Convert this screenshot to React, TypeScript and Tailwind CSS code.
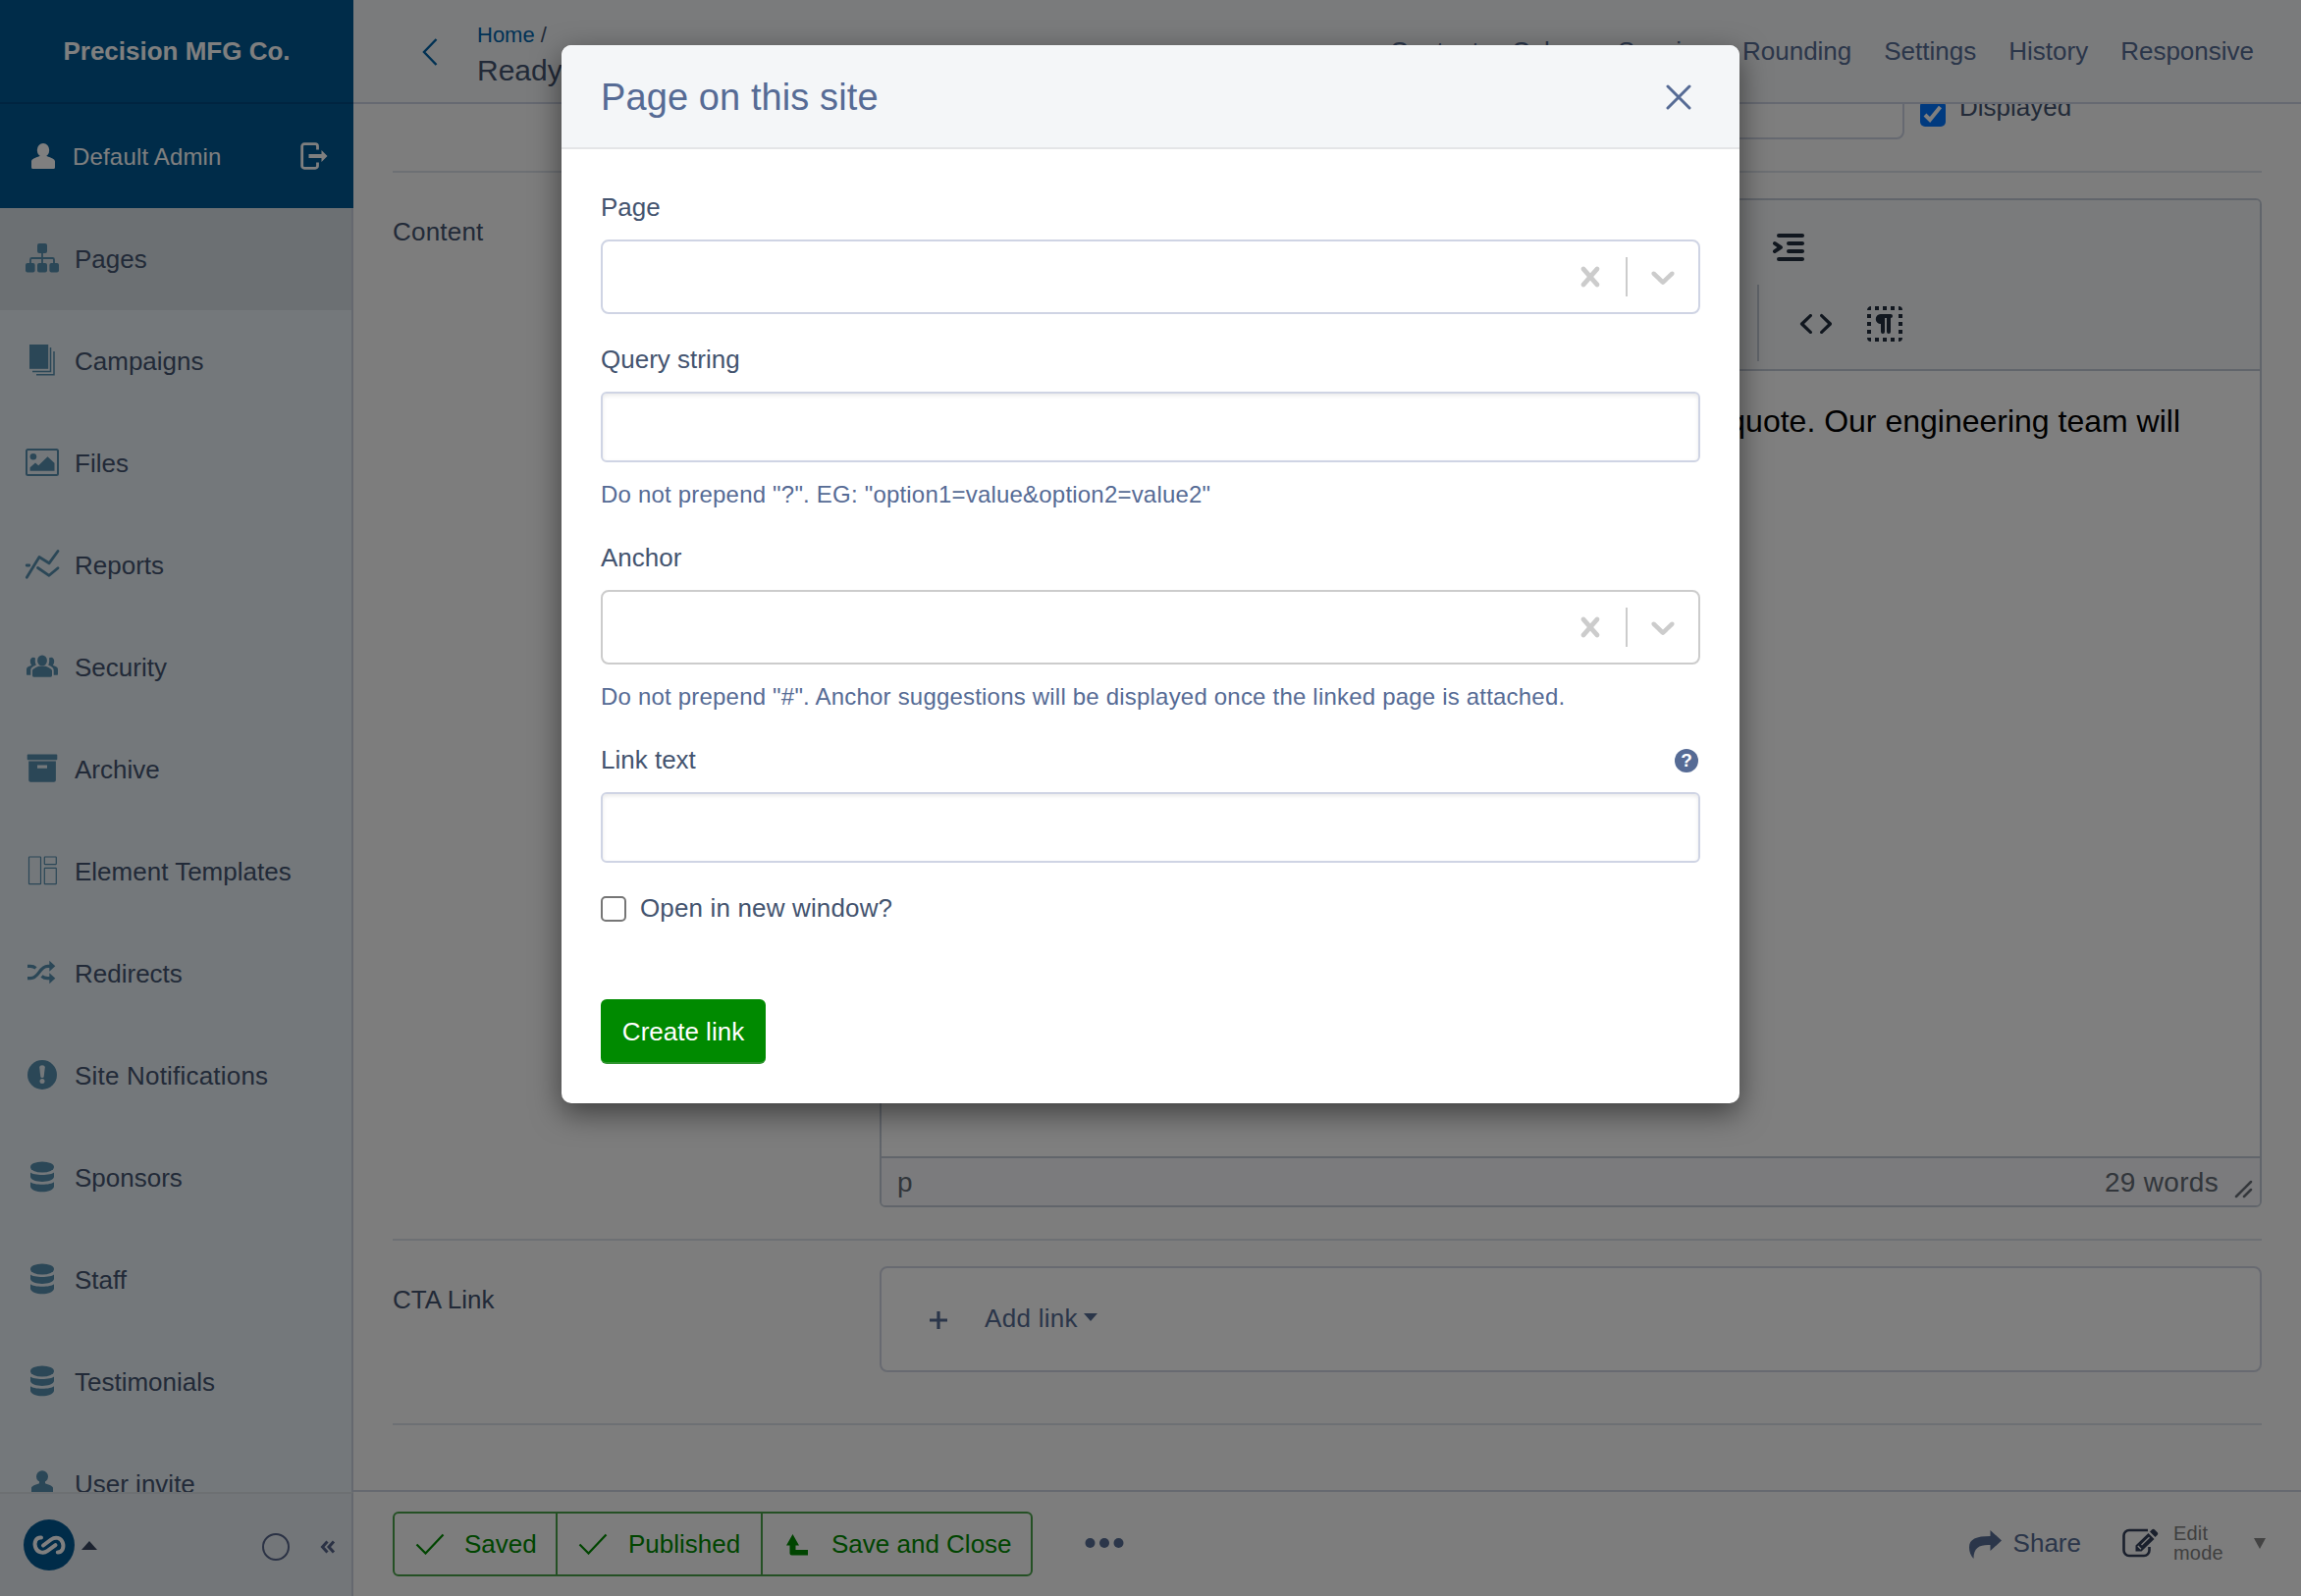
import type { ReactNode } from 'react';
import clsx from 'clsx';

const dbIcon = (
    <>
        <ellipse cx="20" cy="9" rx="12" ry="5.6" />
        <path d="M8 14.5c2.5 3.3 21.500 3.300 24 0v4.500c-1.500 6.500-22.500 6.500-24 0z" />
        <path d="M8 24.300c2.500 3.300 21.500 3.300 24 0v4.700c-1.500 7-22.500 7-24 0z" />
    </>
);

const navigation: { name: string; active?: boolean; icon: ReactNode }[] = [
    {
        name: 'Pages',
        active: true,
        icon: (
            <>
                <rect x="15" y="4" width="10" height="10" rx="2" />
                <rect x="3" y="24" width="9.600" height="9.600" rx="2" />
                <rect x="15" y="24" width="10" height="9.600" rx="2" />
                <rect x="27.400" y="24" width="9.600" height="9.600" rx="2" />
                <path d="M20 13v12M8 25v-4.500a1.500 1.500 0 0 1 1.500-1.500h21a1.500 1.500 0 0 1 1.500 1.500V25" fill="none" stroke="currentColor" strokeWidth="1.800" />
            </>
        ),
    },
    {
        name: 'Campaigns',
        icon: (
            <>
                <path d="M7 3h19.200v24.800H7z" />
                <path d="M28.500 6v24.500H10M32 10v23.800H14" fill="none" stroke="currentColor" strokeWidth="1.500" />
            </>
        ),
    },
    {
        name: 'Files',
        icon: (
            <>
                <rect x="4" y="6" width="32" height="26" rx="1.500" fill="none" stroke="currentColor" strokeWidth="2" />
                <circle cx="10.900" cy="13.300" r="3.300" />
                <path d="M7.600 27.700v-3.500l5.400-4.700 3.200 2.700 9.300-9 7 6.500v8z" />
            </>
        ),
    },
    {
        name: 'Reports',
        icon: (
            <path
                d="M4.300 32.300 17 11.500l10 6.300L36 5.500M15.500 22.500 27 30.300l9-7.600M4.200 20h2.600"
                fill="none"
                stroke="currentColor"
                strokeWidth="2.800"
                strokeLinecap="round"
                strokeLinejoin="round"
            />
        ),
    },
    {
        name: 'Security',
        icon: (
            <>
                <ellipse cx="20" cy="13" rx="4.900" ry="5.600" />
                <path d="M10 28v-4.500c0-1.500 1-2.300 6.500-4.800h7c5.500 2.500 6.500 3.300 6.500 4.800V28a1.500 1.500 0 0 1-1.500 1.700h-17A1.500 1.500 0 0 1 10 28z" />
                <path d="M13 10.500c-2.500-2-5.500 0-5.200 3.500.1 1.500.6 2.800 1.400 3.700-3.500 1.500-5.200 2-5.200 4.300v4.800c0 .8.300 1 1 1h3.300V23c0-2.500 1.500-3.500 5.500-5.500-1-2-1.300-4.500-.8-7zM27 10.500c2.500-2 5.500 0 5.200 3.500-.1 1.500-.6 2.800-1.400 3.700 3.500 1.500 5.200 2 5.200 4.300v4.800c0 .8-.3 1-1 1h-3.300V23c0-2.500-1.500-3.500-5.500-5.500 1-2 1.300-4.500.8-7z" />
            </>
        ),
    },
    {
        name: 'Archive',
        icon: (
            <>
                <rect x="4.700" y="4.500" width="30.600" height="5.800" rx="1" />
                <path fillRule="evenodd" d="M6.200 11.600h27.700v19.200a2 2 0 0 1-2 2H8.200a2 2 0 0 1-2-2zM15 15.400v3.300h10v-3.300z" />
            </>
        ),
    },
    {
        name: 'Element Templates',
        icon: (
            <g fill="none" stroke="currentColor" strokeWidth="1.200">
                <rect x="6.500" y="5" width="12" height="27.700" rx=".5" />
                <rect x="22.300" y="5" width="12" height="7.600" rx=".5" />
                <rect x="22.300" y="16.300" width="12" height="16.400" rx=".5" />
            </g>
        ),
    },
    {
        name: 'Redirects',
        icon: (
            <>
                <path
                    d="M5 12.300h3c2.500 0 4 .6 5.500 2M5 24.700h3c9 0 9-12.400 17.500-12.400h2.500M19.500 22.500c1.800 1.600 3.500 2.200 6 2.200H28"
                    fill="none"
                    stroke="currentColor"
                    strokeWidth="3.200"
                />
                <path d="M27.300 6.800v11l6-5.500zM27.300 19.200v11l6-5.500z" />
            </>
        ),
    },
    {
        name: 'Site Notifications',
        icon: (
            <>
                <circle cx="20" cy="19" r="15" />
                <path d="M17.200 11.500c0-3 5.600-3 5.600 0L21.700 21c-.2 1.300-3.200 1.300-3.400 0z" className="fill-[#e8f0f6]" />
                <circle cx="20" cy="25.500" r="2.500" className="fill-[#e8f0f6]" />
            </>
        ),
    },
    { name: 'Sponsors', icon: dbIcon },
    { name: 'Staff', icon: dbIcon },
    { name: 'Testimonials', icon: dbIcon },
    {
        name: 'User invite',
        icon: (
            <>
                <circle cx="20" cy="12.300" r="6" />
                <path d="M9 34V24c0-2 3-3 8-4.800v-3h6v3c5 1.800 8 2.800 8 4.800v10z" />
            </>
        ),
    },
];

const elementTabs = ['Content', 'Colors', 'Spacing', 'Rounding', 'Settings', 'History', 'Responsive'];

function Sidebar() {
    return (
        <aside className="flex w-[360px] shrink-0 flex-col bg-[#e8f0f6]">
            <div className="flex h-[106px] shrink-0 items-center justify-center border-b-2 border-[#004880] bg-[#005893] text-[26px] font-bold text-white">
                Precision MFG Co.
            </div>
            <div className="flex h-[106px] shrink-0 items-center bg-[#005893] pr-[26px] pl-8 text-white">
                <svg width="24" height="28" viewBox="0 0 24 28" fill="currentColor">
                    <ellipse cx="12" cy="8" rx="6.200" ry="7" />
                    <path d="M0 25.500v-6c0-2.500 3.500-3.500 8.500-5.500h7c5 2 8.500 3 8.500 5.500v6a1.500 1.500 0 0 1-1.500 1.500h-21A1.500 1.500 0 0 1 0 25.500z" />
                </svg>
                <span className="mt-0.5 ml-[18px] text-[24px] tracking-[0.17px]">Default Admin</span>
                <svg className="ml-auto" width="28" height="28" viewBox="0 0 28 28" fill="none">
                    <path d="M17.500 7.500V4a2.300 2.300 0 0 0-2.300-2.300H4A2.300 2.300 0 0 0 1.700 4v20A2.300 2.300 0 0 0 4 26.300h11.200a2.300 2.300 0 0 0 2.300-2.300v-3.500" stroke="currentColor" strokeWidth="2.800" />
                    <path d="M8.500 12h13V8l6 6-6 6v-4h-13z" fill="currentColor" />
                </svg>
            </div>
            <nav className="min-h-0 flex-1 overflow-hidden border-r-2 border-[#cad0de]">
                {navigation.map((item) => (
                    <a key={item.name} className={clsx('flex h-[104px] items-center pl-[23px] text-[26px] text-[#445571]', item.active && 'bg-[#d8e1e7]')}>
                        <svg width="40" height="40" viewBox="0 0 40 40" fill="currentColor" className="text-[#568eae]">
                            {item.icon}
                        </svg>
                        <span className={clsx('ml-[13px]', item.name === 'Site Notifications' && 'tracking-[0.2px]')}>{item.name}</span>
                    </a>
                ))}
            </nav>
            <div className="flex h-[106px] shrink-0 items-center border-t-2 border-r-2 border-t-[#dae0e5] border-r-[#cad0de] bg-[#e7edf2] pr-4 pl-6">
                <svg width="52" height="52" viewBox="0 0 52 52">
                    <circle cx="26" cy="26" r="26" className="fill-[#005893]" />
                    <path
                        d="M18 18.500C12.500 18 10.500 23.500 12.200 28.500c1.700 5.200 8 6.500 12 3.700l8.300-6M20 26.500l8-6c4.500-3.300 10-2 11.800 3 1.800 5-.3 10-5 10"
                        fill="none"
                        stroke="#fff"
                        strokeWidth="4"
                        strokeLinecap="round"
                    />
                </svg>
                <svg className="ml-[7px]" width="16" height="9" viewBox="0 0 16 9">
                    <path d="M0 9l8-9 8 9z" fill="#384761" />
                </svg>
                <span className="mt-1 ml-auto size-7 rounded-full border-2 border-[#56648a]" />
                <svg className="mt-1 ml-[31px]" width="16" height="15" viewBox="0 0 16 15" fill="none" stroke="#56648a" strokeWidth="3">
                    <path d="M7.500 1.500 2.500 7l5 5.500M14 1.500 9 7l5 5.500" />
                </svg>
            </div>
        </aside>
    );
}

function Header() {
    return (
        <header className="flex h-[106px] shrink-0 items-center border-b-2 border-[#ccd2e2] bg-[#f4f6f9] pr-12 pl-[70px]">
            <svg className="mt-0.5" width="16" height="28" viewBox="0 0 16 28" fill="none" stroke="#0062a6" strokeWidth="2.400">
                <path d="M14.500 1 2 14l12.500 13" />
            </svg>
            <div className="mt-[5px] ml-10 flex flex-col text-[#445571]">
                <span className="text-[22px] leading-[34px]">
                    <a className="text-[#0065ad]">Home</a> /
                </span>
                <h1 className="text-[30px] leading-[38px]">Ready</h1>
            </div>
            <nav className="ml-auto flex gap-[33px] text-[26px] text-[#566c94]">
                {elementTabs.map((tab) => (
                    <a key={tab}>{tab}</a>
                ))}
            </nav>
        </header>
    );
}

function RichTextEditor() {
    return (
        <div className="flex h-[1028px] w-[1408px] flex-col overflow-hidden rounded-md border-2 border-[#c2cbd6] bg-white">
            <div className="h-[174px] shrink-0 border-b-2 border-[#c2cbd6] bg-[#f4f6f9] text-[#222f3e]">
                <div className="flex h-[86px] items-center pt-2.5 pl-[900px]">
                    <svg width="48" height="48" viewBox="0 0 24 24" fill="currentColor">
                        <path d="M7 5h12c.6 0 1 .4 1 1s-.4 1-1 1H7a1 1 0 1 1 0-2Zm5 4h7c.6 0 1 .4 1 1s-.4 1-1 1h-7a1 1 0 0 1 0-2Zm0 4h7c.6 0 1 .4 1 1s-.4 1-1 1h-7a1 1 0 0 1 0-2Zm-5 4h12c.6 0 1 .4 1 1s-.4 1-1 1H7a1 1 0 0 1 0-2Zm-2.600-3.800L6.200 12l-1.800-1.200a1 1 0 0 1 1.200-1.600l3 2a1 1 0 0 1 0 1.600l-3 2a1 1 0 1 1-1.200-1.600Z" />
                    </svg>
                </div>
                <div className="ml-[892px] flex h-[78px] items-center gap-[22px] border-l-2 border-[#c2cbd6] pt-0.5 pl-[34px]">
                    <svg width="48" height="48" viewBox="0 0 24 24" fill="currentColor">
                        <path d="M9.800 15.700c.3.3.3.8 0 1-.3.4-.9.4-1.200 0l-4.400-4.100a.8.8 0 0 1 0-1.200l4.400-4.200c.3-.3.9-.3 1.200 0 .3.3.3.8 0 1.100L6 12l3.800 3.700ZM14.200 15.700c-.3.3-.3.8 0 1 .4.4.9.4 1.200 0l4.400-4.100c.3-.3.3-.9 0-1.200l-4.400-4.200a.8.8 0 0 0-1.200 0c-.3.3-.3.8 0 1.100L18 12l-3.800 3.700Z" />
                    </svg>
                    <svg width="48" height="48" viewBox="0 0 24 24" fill="currentColor">
                        <path d="M9 19v2H7v-2h2Zm-4 0v2a2 2 0 0 1-2-2h2Zm8 0v2h-2v-2h2Zm8 0a2 2 0 0 1-2 2v-2h2Zm-4 0v2h-2v-2h2ZM15 7a1 1 0 0 1 0 2v7a1 1 0 0 1-2 0V9h-1v7a1 1 0 0 1-2 0v-4a2.500 2.500 0 0 1-.2-5H15ZM5 15v2H3v-2h2Zm16 0v2h-2v-2h2ZM5 11v2H3v-2h2Zm16 0v2h-2v-2h2ZM5 7v2H3V7h2Zm16 0v2h-2V7h2ZM5 3v2H3c0-1.100.9-2 2-2Zm8 0v2h-2V3h2Zm6 0a2 2 0 0 1 2 2h-2V3ZM9 3v2H7V3h2Zm8 0v2h-2V3h2Z" />
                    </svg>
                </div>
            </div>
            <p className="flex-1 pt-[30px] pr-[81px] text-right text-[32px] leading-[42px] text-black">quote. Our engineering team will</p>
            <div className="flex h-[50px] shrink-0 items-center border-t-2 border-[#c2cbd6] bg-[#f6f7fb] pr-1.5 pl-4 text-[28px] text-[#646c76]">
                <span className="mt-px">p</span>
                <span className="mt-px ml-auto tracking-[0.3px]">29 words</span>
                <svg className="mt-4 ml-4" width="20" height="20" viewBox="0 0 20 20" stroke="#6b7079" strokeWidth="2.500" strokeLinecap="round">
                    <path d="M2 17 17 2M10 17l7-7" />
                </svg>
            </div>
        </div>
    );
}

function ElementForm() {
    return (
        <main className="flex min-h-0 flex-1 flex-col overflow-hidden px-10 text-[26px] text-[#445571]">
            <div className="flex h-[70px] shrink-0 items-start border-b-2 border-[#dbe1e8] pl-[496px]">
                <div className="-mt-9 h-[72px] w-[1044px] rounded-lg border-2 border-[#ccd3e2] bg-[#fdfdfd]" />
                <span className="-mt-[3px] ml-4 flex size-[26px] items-center justify-center rounded-[5px] bg-[#0075ff]">
                    <svg width="20" height="20" viewBox="0 0 20 20" fill="none" stroke="#fff" strokeWidth="4">
                        <path d="M2 11l5 5L17.500 3" />
                    </svg>
                </span>
                <span className="-mt-3 ml-3.5 leading-[30px]">Displayed</span>
            </div>
            <div className="flex h-[1088px] shrink-0 items-start border-b-2 border-[#dbe1e8] pt-[26px]">
                <span className="mt-4 w-[496px] leading-[36px] tracking-[0.2px]">Content</span>
                <RichTextEditor />
            </div>
            <div className="flex h-[188px] shrink-0 items-start border-b-2 border-[#dbe1e8] pt-[26px]">
                <span className="mt-4 w-[496px] leading-[36px]">CTA Link</span>
                <div className="flex h-[108px] w-[1408px] items-center rounded-lg border-2 border-[#d0d5e2] bg-white pl-12 text-[#566c94]">
                    <svg className="mt-0.5" width="20" height="20" viewBox="0 0 20 20" stroke="currentColor" strokeWidth="3.200">
                        <path d="M1 10h18M10 1v18" />
                    </svg>
                    <span className="-mt-0.5 ml-[37px] tracking-[0.3px]">Add link</span>
                    <svg className="-mt-1 ml-1.5" width="14" height="8" viewBox="0 0 14 8" fill="currentColor">
                        <path d="M0 0h14L7 8z" />
                    </svg>
                </div>
            </div>
        </main>
    );
}

function CheckIcon() {
    return (
        <svg width="30" height="22" viewBox="0 0 30 22" fill="none" stroke="currentColor" strokeWidth="2.200">
            <path d="M1.500 11.500 10.500 20.500 28.500 1.500" />
        </svg>
    );
}

function Footer() {
    return (
        <footer className="flex h-[108px] shrink-0 items-center border-t-2 border-[#ccd2e0] pr-9 pl-10 text-[26px]">
            <div className="flex h-[66px] overflow-hidden rounded-md border-2 border-[#48a048] text-[#008a00]">
                <a className="flex w-[166px] items-center gap-5 border-r-2 border-[#48a048] pl-[21px]">
                    <CheckIcon />
                    Saved
                </a>
                <a className="flex w-[209px] items-center gap-[21px] border-r-2 border-[#48a048] pl-[21px]">
                    <CheckIcon />
                    Published
                </a>
                <a className="flex w-[273px] items-center gap-6 pl-6">
                    <svg className="mt-0.5" width="22" height="22" viewBox="0 0 22 22" fill="currentColor">
                        <path d="M6.500 0 13 11.500H9.500V16H22v5.500H5.500a2 2 0 0 1-2-2v-8H0z" />
                    </svg>
                    Save and Close
                </a>
            </div>
            <svg className="-mt-0.5 ml-[53px]" width="40" height="12" viewBox="0 0 40 12" fill="#566c94">
                <circle cx="5.500" cy="6" r="5" />
                <circle cx="20" cy="6" r="5" />
                <circle cx="34.500" cy="6" r="5" />
            </svg>
            <div className="-mt-0.5 ml-auto flex items-center">
                <svg className="mt-0.5" width="33" height="29" viewBox="0 0 33 29" fill="#566c94">
                    <path d="M21.500 0 33 10.500 21.500 21v-6C11 14.500 4.500 17 4.500 29 1.500 26 0 22 0 17.500 0 9 7 6 21.500 6z" />
                </svg>
                <span className="ml-3 text-[#566c94]">Share</span>
                <svg className="ml-[42px]" width="37" height="30" viewBox="0 0 37 30" fill="none">
                    <path d="M26 2H7a5.500 5.500 0 0 0-5.500 5.500v15A5.500 5.500 0 0 0 7 28h15a5.500 5.500 0 0 0 5.500-5.500V19" stroke="#34405a" strokeWidth="2.600" />
                    <path d="m13.500 17.500 13-12.500 6 6-13 12.500h-6zM28 3.500 30 1.500c1-1 2-1 3 0l2.500 2.500c1 1 1 2 0 3L33.500 9z" fill="#34405a" />
                    <path d="m15.800 18 3.200 3.200M19.500 17l8-7.800" stroke="#fafafa" strokeWidth="1.400" />
                </svg>
                <span className="ml-[15px] w-[82px] text-[20px] leading-5 tracking-[0.2px] text-[#808080]">
                    Edit
                    <br />
                    mode
                </span>
                <svg width="12" height="11" viewBox="0 0 12 11">
                    <path d="M0 0h12L6 11z" fill="#868686" />
                </svg>
            </div>
        </footer>
    );
}

interface FieldProps {
    label: string;
    hint?: string;
    help?: boolean;
    children: ReactNode;
}

function Field({ label, hint, help, children }: FieldProps) {
    return (
        <div>
            <div className="mb-[13px] flex items-center justify-between leading-[39px]">
                <label>{label}</label>
                {help && (
                    <span className="mr-0.5 flex size-6 items-center justify-center rounded-full bg-[#566b95] text-[19px] leading-none font-bold text-white">?</span>
                )}
            </div>
            {children}
            {hint && <p className="mt-[15px] text-[24px] leading-9 tracking-[0.2px] text-[#566b95]">{hint}</p>}
        </div>
    );
}

function SelectInput({ className }: { className: string }) {
    return (
        <div className={clsx('flex h-[76px] items-center justify-end rounded-lg border-2 bg-white text-[#ccc]', className)}>
            <svg className="mr-4" width="40" height="40" viewBox="0 0 20 20" fill="currentColor">
                <path d="M14.348 14.849c-0.469 0.469-1.229 0.469-1.697 0l-2.651-3.030-2.651 3.029c-0.469 0.469-1.229 0.469-1.697 0-0.469-0.469-0.469-1.229 0-1.697l2.758-3.150-2.759-3.152c-0.469-0.469-0.469-1.228 0-1.697s1.228-0.469 1.697 0l2.652 3.031 2.651-3.031c0.469-0.469 1.228-0.469 1.697 0s0.469 1.229 0 1.697l-2.758 3.152 2.758 3.150c0.469 0.469 0.469 1.229 0 1.698z" />
            </svg>
            <span className="h-10 w-0.5 bg-[#ccc]" />
            <svg className="mx-4" width="40" height="40" viewBox="0 0 20 20" fill="currentColor">
                <path d="M4.516 7.548c0.436-0.446 1.043-0.481 1.576 0l3.908 3.747 3.908-3.747c0.533-0.481 1.141-0.446 1.574 0 0.436 0.445 0.408 1.197 0 1.615-0.406 0.418-4.695 4.502-4.695 4.502-0.217 0.223-0.502 0.335-0.787 0.335s-0.570-0.112-0.789-0.335c0 0-4.287-4.084-4.695-4.502s-0.436-1.170 0-1.615z" />
            </svg>
        </div>
    );
}

function TextInput() {
    return <input className="block h-[72px] w-full rounded-md border-2 border-[#cfd4e4] bg-white shadow-[inset_0_2px_4px_rgba(0,0,0,0.09)]" />;
}

function LinkModal() {
    return (
        <div className="w-[1200px] overflow-hidden rounded-[10px] bg-white shadow-[0_10px_30px_rgba(0,0,0,0.5)]">
            <div className="flex h-[106px] items-center justify-between border-b-2 border-[#e4e5e7] bg-[#f4f6f8] pt-0.5 pr-[49px] pl-10 text-[#566b95]">
                <h2 className="text-[38px] tracking-[0.1px]">Page on this site</h2>
                <svg width="26" height="26" viewBox="0 0 26 26" fill="none" stroke="currentColor" strokeWidth="3" strokeLinecap="round">
                    <path d="M2 2l22 22M24 2 2 24" />
                </svg>
            </div>
            <form className="flex flex-col gap-[27px] p-10 text-[26px] text-[#44546f]">
                <Field label="Page">
                    <SelectInput className="border-[#cfd4e4]" />
                </Field>
                <Field label="Query string" hint={'Do not prepend "?". EG: "option1=value&option2=value2"'}>
                    <TextInput />
                </Field>
                <Field label="Anchor" hint={'Do not prepend "#". Anchor suggestions will be displayed once the linked page is attached.'}>
                    <SelectInput className="border-[#ccc]" />
                </Field>
                <Field label="Link text" help>
                    <TextInput />
                </Field>
                <label className="flex items-center gap-3.5 leading-[39px] tracking-[0.15px]">
                    <span className="size-[26px] rounded-[5px] border-2 border-[#767676] bg-white" />
                    Open in new window?
                </label>
                <button type="button" className="mt-[46px] h-[66px] w-[168px] rounded-md border-b-2 border-[#2f942f] bg-[#008a00] pt-[3px] text-white">
                    Create link
                </button>
            </form>
        </div>
    );
}

export default function App() {
    return (
        <div className="relative flex h-[1626px] w-[2344px] overflow-hidden bg-[#fafafa] font-['Helvetica_Neue','Liberation_Sans',Arial,sans-serif]">
            <Sidebar />
            <div className="flex min-w-0 flex-1 flex-col">
                <Header />
                <ElementForm />
                <Footer />
            </div>
            {/* Backdrop */}
            <div className="absolute inset-0 flex items-start justify-center bg-black/50 pt-[46px]">
                <LinkModal />
            </div>
        </div>
    );
}
